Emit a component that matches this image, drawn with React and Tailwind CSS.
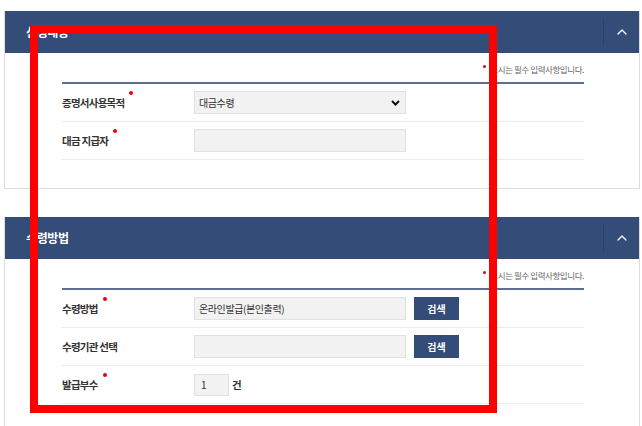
import { ChevronUp } from 'lucide-react';

const FONT = "font-['Noto_Sans_CJK_KR','Noto_Sans',sans-serif]";

function Dot() {
    return <span className="ml-[5px] mb-[20px] w-[4px] h-[4px] rounded-full bg-[#e60012]" />;
}

function Row({ label, required, children }) {
    return (
        <div className="flex items-center h-[38px] border-b border-[#ececec]">
            <div className="w-[132px] flex items-center">
                <span className="text-[10.5px] font-bold text-[#333] tracking-[-0.07em]">{label}</span>
                {required && <Dot />}
            </div>
            <div className="flex items-center gap-[8px]">{children}</div>
        </div>
    );
}

function Field({ value = '', select = false }) {
    return (
        <div className="w-[212px] h-[23px] bg-[#f2f2f2] border border-[#e2e2e2] flex items-center justify-between px-[4px]">
            <span className="text-[10px] text-[#333] tracking-[-0.04em]">{value}</span>
            {select && (
                <svg width="9" height="6" viewBox="0 0 9 6" className="mr-[1px]">
                    <path d="M1 1 L4.5 4.5 L8 1" fill="none" stroke="#111" strokeWidth="2" />
                </svg>
            )}
        </div>
    );
}

function SearchButton() {
    return (
        <button className="w-[45px] h-[23px] bg-[#344c78] text-white text-[10px] font-bold flex items-center justify-center">
            검색
        </button>
    );
}

function Panel({ title, children }) {
    return (
        <div className="w-[636px] border border-t-0 border-[#dddddd]">
            <div className="h-[42px] bg-[#344c78] flex items-center justify-between">
                <h2 className="pl-[21px] text-[12px] font-bold text-white tracking-[-0.03em]">{title}</h2>
                <div className="flex items-center h-full">
                    <div className="w-px h-[28px] bg-[#2c4169]" />
                    <div className="w-[35px] flex items-center justify-center">
                        <ChevronUp size={16} strokeWidth={2} className="text-white" />
                    </div>
                </div>
            </div>
            <div className="pl-[57px] pr-[55px] pt-[8px] pb-[28px]">
                <div className="h-[16px] flex items-center justify-end">
                    <span className="mb-[6px] mr-[4px] w-[3px] h-[3px] rounded-full bg-[#e60012]" />
                    <span className="text-[8.5px] text-[#666] tracking-[-0.05em]">표시는 필수 입력사항입니다.</span>
                </div>
                <div className="mt-[5px] border-t-2 border-[#5d6e93]">{children}</div>
            </div>
        </div>
    );
}

export default function App() {
    return (
        <div className={`relative w-[642px] h-[426px] overflow-hidden bg-white pt-[11px] pl-[4px] ${FONT}`}>
            <Panel title="신청내용">
                <Row label="증명서사용목적" required>
                    <Field value="대금수령" select />
                </Row>
                <Row label="대금 지급자" required>
                    <Field />
                </Row>
            </Panel>

            <div className="h-[28px]" />

            <Panel title="수령방법">
                <Row label="수령방법" required>
                    <Field value="온라인발급(본인출력)" />
                    <SearchButton />
                </Row>
                <Row label="수령기관 선택">
                    <Field />
                    <SearchButton />
                </Row>
                <Row label="발급부수" required>
                    <div className="w-[35px] h-[22px] bg-[#f2f2f2] border border-[#e2e2e2] flex items-center px-[6px]">
                        <span className="text-[10px] text-[#333]">1</span>
                    </div>
                    <span className="-ml-[5px] text-[10.5px] font-bold text-[#333]">건</span>
                </Row>
            </Panel>

            {/* annotation box drawn over the form */}
            <div className="absolute left-[30px] top-[25px] w-[467px] h-[388px] border-[8px] border-[#ff0000]" />
        </div>
    );
}
